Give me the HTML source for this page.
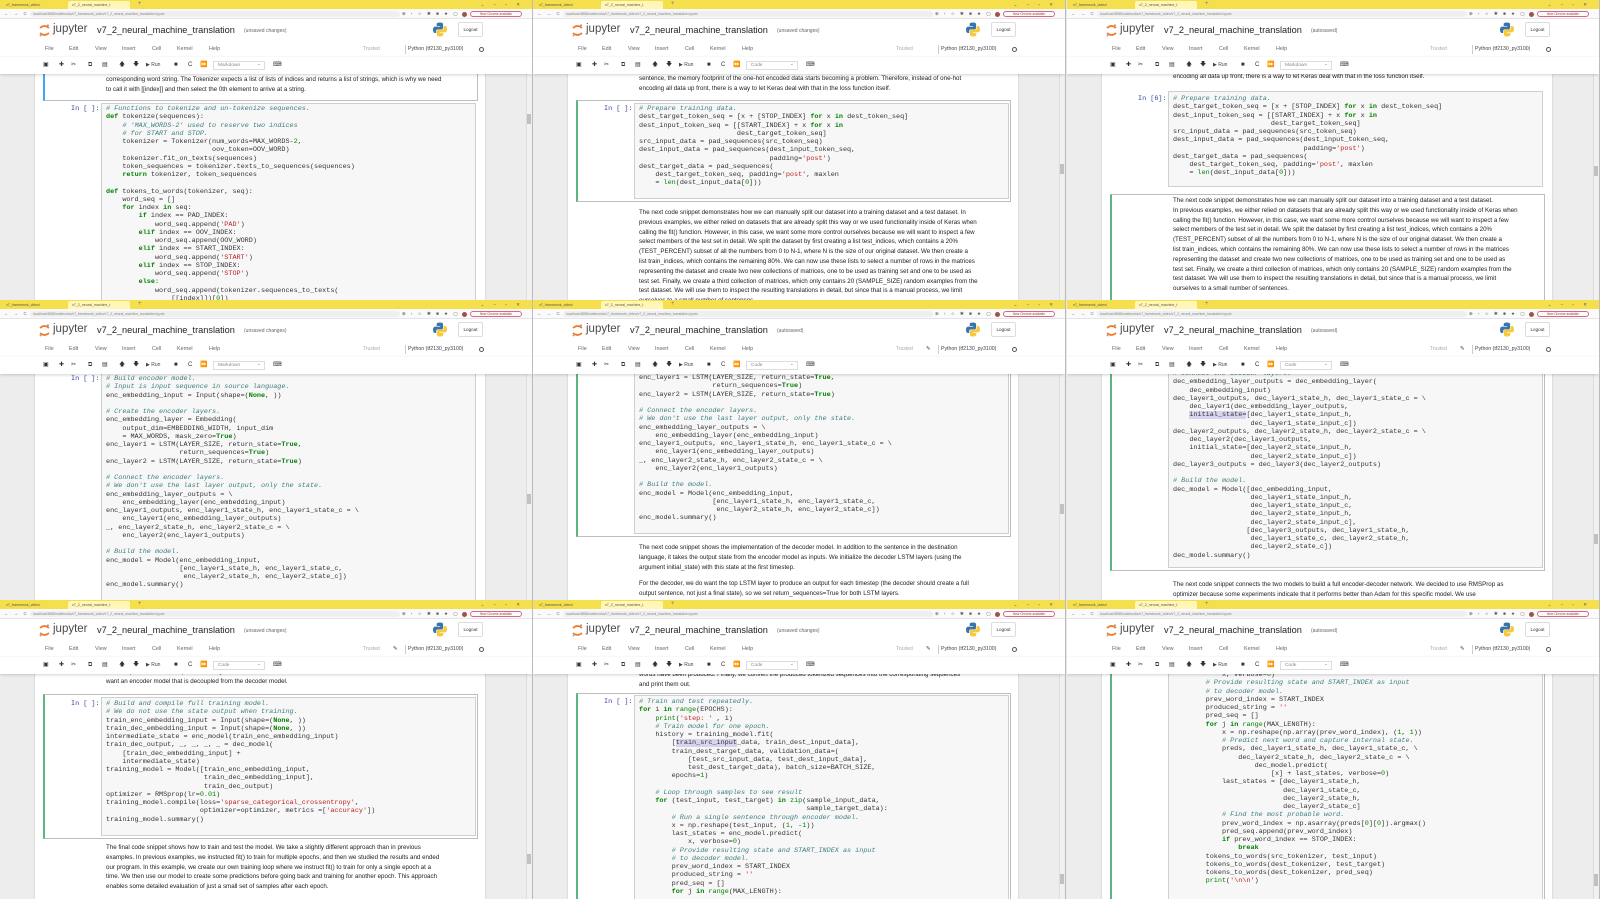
<!DOCTYPE html>
<html><head><meta charset="utf-8">
<style>
*{margin:0;padding:0;box-sizing:border-box}
html,body{width:1600px;height:899px;overflow:hidden;background:#e8e8e8;font-family:"Liberation Sans",sans-serif}
.p{position:absolute;width:533px;height:300px;overflow:hidden;background:#ededed;border-right:1px solid #bbb}
.p .nbk{position:absolute;left:35px;width:450px;top:0;bottom:0;background:#fff;box-shadow:0 0 2px rgba(0,0,0,.2)}
.yb{position:absolute;left:0;top:0;width:100%;height:9px;background:#f5df4d;z-index:3}
.yb .tab{position:absolute;top:1px;height:8px;font-size:3.6px;line-height:8px;color:#555;padding-left:4px;width:62px;white-space:nowrap;overflow:hidden}
.yb .t1{left:2px}
.yb .t2{left:68px;background:#fff6b8;border-radius:2px 2px 0 0}
.yb .plus{position:absolute;left:138px;top:0;font-size:6px;color:#777;line-height:9px}
.yb .wc{position:absolute;right:8px;top:0;font-size:4.5px;color:#555;line-height:9px;letter-spacing:4px}
.ab{position:absolute;left:0;top:9px;width:100%;height:10px;background:#fafafa;z-index:3;border-bottom:1px solid #e4e4e4}
.ab .nav{position:absolute;left:4px;top:0;font-size:4.5px;line-height:10px;color:#777;letter-spacing:2px}
.ab .url{position:absolute;left:30px;top:2px;height:6px;width:370px;background:#efefef;border-radius:3px;font-size:3.4px;line-height:6px;color:#888;padding-left:3px;white-space:nowrap;overflow:hidden}
.ab .ic{position:absolute;left:402px;top:0;font-size:4.5px;line-height:10px;color:#555;letter-spacing:2px}
.ab .av{position:absolute;left:462px;top:2.5px;width:5px;height:5px;border-radius:50%;background:#a0524a}
.ab .pill{position:absolute;left:470px;top:2px;width:52px;height:6px;border:1px solid #d06a8a;border-radius:3px;font-size:3.2px;line-height:4px;color:#b33;text-align:center;white-space:nowrap;overflow:hidden}
.hd{position:absolute;left:0;top:19px;width:100%;height:23px;background:#fff;z-index:3}
.hd .jl{position:absolute;left:39px;top:5px}
.hd .jt{position:absolute;left:53px;top:4px;font-size:11.5px;color:#4a4a4a;line-height:13px}
.hd .nt{position:absolute;left:97px;top:5px;font-size:9.2px;color:#222;line-height:12px}
.hd .us{position:absolute;left:244px;top:9px;font-size:5px;color:#666;line-height:6px}
.hd .pl{position:absolute;left:433px;top:3px}
.hd .lo{position:absolute;left:458px;top:3px;width:25px;height:15px;border:1px solid #ddd;border-radius:2px;font-size:4.6px;line-height:13px;text-align:center;color:#333}
.mb{position:absolute;left:0;top:42px;width:100%;height:15px;background:#fff;z-index:3}
.mb span{position:absolute;top:0;font-size:5.4px;line-height:15px;color:#666}
.mb .kn{left:405px;border-left:1px solid #ccc;padding-left:2px;color:#444;font-size:5.2px;line-height:9px;top:3px}
.mb .kc{left:479px;top:4.5px;width:5px;height:5px;border:1px solid #555;border-radius:50%;line-height:0}
.mb .tr{left:363px;color:#aaa;font-size:5px}
.mb .pen{left:393px;color:#444;font-size:5.5px}
.tb{position:absolute;left:0;top:57px;width:100%;height:17px;background:#fff;z-index:3;box-shadow:0 1px 3px rgba(0,0,0,.18)}
.tb span{position:absolute;top:0;font-size:6px;line-height:17px;color:#333}
.tb .sel{left:213px;top:4px;width:52px;height:9px;border:1px solid #ddd;font-size:4.8px;line-height:7px;color:#888;padding-left:4px}
.tb .sel:after{content:"⌄";position:absolute;right:3px;top:-1px;font-size:5px}
.tb .run{font-size:5px;color:#444}
.cell{position:absolute;left:43px;width:435px;border:1px solid transparent}
.cell.sel{border:1px solid #bdbdbd;border-left:2px solid #5db67f}
.cell.md{border:1px solid #bdbdbd;border-left:2px solid #42a5f5}
.area{position:absolute;left:101px;width:375px;background:#f7f7f7;border:1px solid #cfcfcf}
.pr{position:absolute;left:71px;font-family:"Liberation Mono",monospace;font-size:6.8px;line-height:8.25px;color:#303f9f;white-space:pre}
pre{position:absolute;left:106px;font-family:"Liberation Mono",monospace;font-size:6.8px;line-height:8.25px;color:#333;white-space:pre}
.c{color:#3d7f7f;font-style:italic}
.k{color:#008000;font-weight:bold}
.s{color:#ba2121}
.n{color:#080}
.b{color:#008000}
.mdt{position:absolute;left:106px;font-size:6.2px;line-height:9.8px;color:#222;white-space:nowrap}
.sb{position:absolute;right:1px;top:74px;width:5px;bottom:0;background:#f1f1f1;border-left:1px solid #ddd}
.sb i{position:absolute;left:0;width:4px;background:#c1c1c1}
</style></head><body>

<!-- ============ PANEL 1 ============ -->
<div class="p" style="left:0;top:0">
<div class="nbk"></div>
<div class="yb"><span class="tab t1">v7_framework_video/</span><span class="tab t2">v7_2_neural_machine_t</span><span class="plus">+</span><span class="wc">⌄ – ▫ ✕</span></div>
<div class="ab"><span class="nav">← → C</span><span class="url">localhost:8888/notebooks/v7_framework_video/v7_2_neural_machine_translation.ipynb</span><span class="ic">⊕ ‹ ☆ ✱ ■ ★ ▢</span><span class="av"></span><span class="pill">New Chrome available</span></div>
<div class="hd"><svg class="jl" width="11" height="13" viewBox="0 0 11 13"><path d="M1 4 Q5.5 0 10 4" stroke="#f37726" stroke-width="1.6" fill="none"/><path d="M1 9 Q5.5 13 10 9" stroke="#f37726" stroke-width="1.6" fill="none"/><circle cx="9" cy="1.2" r="0.8" fill="#767677"/><circle cx="1.5" cy="11.5" r="0.9" fill="#989798"/></svg><span class="jt">jupyter</span><span class="nt">v7_2_neural_machine_translation</span><span class="us">(unsaved changes)</span><svg class="pl" width="14" height="15" viewBox="0 0 14 15"><path d="M7 0.5C3.5 0.5 3.7 2 3.7 2V4H7.2V4.6H2.2C2.2 4.6 0 4.4 0 7.8S2 11 2 11H3.2V9.3C3.2 9.3 3.1 7.4 5 7.4H8.3C8.3 7.4 10.1 7.4 10.1 5.6V2.3C10.1 2.3 10.4 0.5 7 0.5Z" fill="#3a74a8"/><path d="M7 14.5C10.5 14.5 10.3 13 10.3 13V11H6.8V10.4H11.8C11.8 10.4 14 10.6 14 7.2S12 4 12 4H10.8V5.7C10.8 5.7 10.9 7.6 9 7.6H5.7C5.7 7.6 3.9 7.6 3.9 9.4V12.7C3.9 12.7 3.6 14.5 7 14.5Z" fill="#f7c93e"/></svg><span class="lo">Logout</span></div>
<div class="mb"><span style="left:45px">File</span><span style="left:69px">Edit</span><span style="left:95px">View</span><span style="left:122px">Insert</span><span style="left:152px">Cell</span><span style="left:177px">Kernel</span><span style="left:209px">Help</span><span class="tr">Trusted</span><span class="kn">Python (tf2130_py3100)</span><span class="kc"></span></div>
<div class="tb"><span style="left:43px">▣</span><span style="left:59px">✚</span><span style="left:71px">✂</span><span style="left:88px">⧉</span><span style="left:102px">▤</span><span style="left:119px">🡅</span><span style="left:133px">🡇</span><span class="run" style="left:146px">▶ Run</span><span style="left:174px">■</span><span style="left:188px">C</span><span style="left:200px">⏩</span><span class="sel">Markdown</span><span style="left:273px">⌨</span></div>
<div class="cell md" style="top:70px;height:31px"></div>
<div class="mdt" style="top:75px">corresponding word string. The Tokenizer expects a list of lists of indices and returns a list of strings, which is why we need<br>to call it with [[index]] and then select the 0th element to arrive at a string.</div>
<div class="area" style="top:103px;height:200px"></div>
<div class="pr" style="top:105px">In [ ]:</div>
<pre style="top:105px"><span class="c"># Functions to tokenize and un-tokenize sequences.</span>
<span class="k">def</span> tokenize(sequences):
    <span class="c"># 'MAX_WORDS-2' used to reserve two indices</span>
    <span class="c"># for START and STOP.</span>
    tokenizer = Tokenizer(num_words=MAX_WORDS-<span class="n">2</span>,
                          oov_token=OOV_WORD)
    tokenizer.fit_on_texts(sequences)
    token_sequences = tokenizer.texts_to_sequences(sequences)
    <span class="k">return</span> tokenizer, token_sequences

<span class="k">def</span> tokens_to_words(tokenizer, seq):
    word_seq = []
    <span class="k">for</span> index <span class="k">in</span> seq:
        <span class="k">if</span> index == PAD_INDEX:
            word_seq.append(<span class="s">'PAD'</span>)
        <span class="k">elif</span> index == OOV_INDEX:
            word_seq.append(OOV_WORD)
        <span class="k">elif</span> index == START_INDEX:
            word_seq.append(<span class="s">'START'</span>)
        <span class="k">elif</span> index == STOP_INDEX:
            word_seq.append(<span class="s">'STOP'</span>)
        <span class="k">else</span>:
            word_seq.append(tokenizer.sequences_to_texts(
                [[index]])[<span class="n">0</span>])</pre>
<div class="sb"><i style="top:40px;height:10px"></i></div>
</div>

<!-- ============ PANEL 2 ============ -->
<div class="p" style="left:533px;top:0">
<div class="nbk"></div>
<div class="yb"><span class="tab t1">v7_framework_video/</span><span class="tab t2">v7_2_neural_machine_t</span><span class="plus">+</span><span class="wc">⌄ – ▫ ✕</span></div>
<div class="ab"><span class="nav">← → C</span><span class="url">localhost:8888/notebooks/v7_framework_video/v7_2_neural_machine_translation.ipynb</span><span class="ic">⊕ ‹ ☆ ✱ ■ ★ ▢</span><span class="av"></span><span class="pill">New Chrome available</span></div>
<div class="hd"><svg class="jl" width="11" height="13" viewBox="0 0 11 13"><path d="M1 4 Q5.5 0 10 4" stroke="#f37726" stroke-width="1.6" fill="none"/><path d="M1 9 Q5.5 13 10 9" stroke="#f37726" stroke-width="1.6" fill="none"/><circle cx="9" cy="1.2" r="0.8" fill="#767677"/><circle cx="1.5" cy="11.5" r="0.9" fill="#989798"/></svg><span class="jt">jupyter</span><span class="nt">v7_2_neural_machine_translation</span><span class="us">(unsaved changes)</span><svg class="pl" width="14" height="15" viewBox="0 0 14 15"><path d="M7 0.5C3.5 0.5 3.7 2 3.7 2V4H7.2V4.6H2.2C2.2 4.6 0 4.4 0 7.8S2 11 2 11H3.2V9.3C3.2 9.3 3.1 7.4 5 7.4H8.3C8.3 7.4 10.1 7.4 10.1 5.6V2.3C10.1 2.3 10.4 0.5 7 0.5Z" fill="#3a74a8"/><path d="M7 14.5C10.5 14.5 10.3 13 10.3 13V11H6.8V10.4H11.8C11.8 10.4 14 10.6 14 7.2S12 4 12 4H10.8V5.7C10.8 5.7 10.9 7.6 9 7.6H5.7C5.7 7.6 3.9 7.6 3.9 9.4V12.7C3.9 12.7 3.6 14.5 7 14.5Z" fill="#f7c93e"/></svg><span class="lo">Logout</span></div>
<div class="mb"><span style="left:45px">File</span><span style="left:69px">Edit</span><span style="left:95px">View</span><span style="left:122px">Insert</span><span style="left:152px">Cell</span><span style="left:177px">Kernel</span><span style="left:209px">Help</span><span class="tr">Trusted</span><span class="kn">Python (tf2130_py3100)</span><span class="kc"></span></div>
<div class="tb"><span style="left:43px">▣</span><span style="left:59px">✚</span><span style="left:71px">✂</span><span style="left:88px">⧉</span><span style="left:102px">▤</span><span style="left:119px">🡅</span><span style="left:133px">🡇</span><span class="run" style="left:146px">▶ Run</span><span style="left:174px">■</span><span style="left:188px">C</span><span style="left:200px">⏩</span><span class="sel">Code</span><span style="left:273px">⌨</span></div>
<div class="mdt" style="top:74px">sentence, the memory footprint of the one-hot encoded data starts becoming a problem. Therefore, instead of one-hot<br>encoding all data up front, there is a way to let Keras deal with that in the loss function itself.</div>
<div class="cell sel" style="top:100px;height:102px"></div>
<div class="area" style="top:103px;height:96px"></div>
<div class="pr" style="top:105px">In [ ]:</div>
<pre style="top:105px"><span class="c"># Prepare training data.</span>
dest_target_token_seq = [x + [STOP_INDEX] <span class="k">for</span> x <span class="k">in</span> dest_token_seq]
dest_input_token_seq = [[START_INDEX] + x <span class="k">for</span> x <span class="k">in</span>
                        dest_target_token_seq]
src_input_data = pad_sequences(src_token_seq)
dest_input_data = pad_sequences(dest_input_token_seq,
                                padding=<span class="s">'post'</span>)
dest_target_data = pad_sequences(
    dest_target_token_seq, padding=<span class="s">'post'</span>, maxlen
    = <span class="b">len</span>(dest_input_data[<span class="n">0</span>]))</pre>
<div class="mdt" style="top:208px">The next code snippet demonstrates how we can manually split our dataset into a training dataset and a test dataset. In<br>previous examples, we either relied on datasets that are already split this way or we used functionality inside of Keras when<br>calling the fit() function. However, in this case, we want some more control ourselves because we will want to inspect a few<br>select members of the test set in detail. We split the dataset by first creating a list test_indices, which contains a 20%<br>(TEST_PERCENT) subset of all the numbers from 0 to N-1, where N is the size of our original dataset. We then create a<br>list train_indices, which contains the remaining 80%. We can now use these lists to select a number of rows in the matrices<br>representing the dataset and create two new collections of matrices, one to be used as training set and one to be used as<br>test set. Finally, we create a third collection of matrices, which only contains 20 (SAMPLE_SIZE) random examples from the<br>test dataset. We will use them to inspect the resulting translations in detail, but since that is a manual process, we limit<br>ourselves to a small number of sentences.</div>
<div class="sb"><i style="top:90px;height:10px"></i></div>
</div>

<!-- ============ PANEL 3 ============ -->
<div class="p" style="left:1067px;top:0;width:533px">
<div class="nbk"></div>
<div class="yb"><span class="tab t1">v7_framework_video/</span><span class="tab t2">v7_2_neural_machine_t</span><span class="plus">+</span><span class="wc">⌄ – ▫ ✕</span></div>
<div class="ab"><span class="nav">← → C</span><span class="url">localhost:8888/notebooks/v7_framework_video/v7_2_neural_machine_translation.ipynb</span><span class="ic">⊕ ‹ ☆ ✱ ■ ★ ▢</span><span class="av"></span><span class="pill">New Chrome available</span></div>
<div class="hd"><svg class="jl" width="11" height="13" viewBox="0 0 11 13"><path d="M1 4 Q5.5 0 10 4" stroke="#f37726" stroke-width="1.6" fill="none"/><path d="M1 9 Q5.5 13 10 9" stroke="#f37726" stroke-width="1.6" fill="none"/><circle cx="9" cy="1.2" r="0.8" fill="#767677"/><circle cx="1.5" cy="11.5" r="0.9" fill="#989798"/></svg><span class="jt">jupyter</span><span class="nt">v7_2_neural_machine_translation</span><span class="us">(autosaved)</span><svg class="pl" width="14" height="15" viewBox="0 0 14 15"><path d="M7 0.5C3.5 0.5 3.7 2 3.7 2V4H7.2V4.6H2.2C2.2 4.6 0 4.4 0 7.8S2 11 2 11H3.2V9.3C3.2 9.3 3.1 7.4 5 7.4H8.3C8.3 7.4 10.1 7.4 10.1 5.6V2.3C10.1 2.3 10.4 0.5 7 0.5Z" fill="#3a74a8"/><path d="M7 14.5C10.5 14.5 10.3 13 10.3 13V11H6.8V10.4H11.8C11.8 10.4 14 10.6 14 7.2S12 4 12 4H10.8V5.7C10.8 5.7 10.9 7.6 9 7.6H5.7C5.7 7.6 3.9 7.6 3.9 9.4V12.7C3.9 12.7 3.6 14.5 7 14.5Z" fill="#f7c93e"/></svg><span class="lo">Logout</span></div>
<div class="mb"><span style="left:45px">File</span><span style="left:69px">Edit</span><span style="left:95px">View</span><span style="left:122px">Insert</span><span style="left:152px">Cell</span><span style="left:177px">Kernel</span><span style="left:209px">Help</span><span class="tr">Trusted</span><span class="kn">Python (tf2130_py3100)</span><span class="kc"></span></div>
<div class="tb"><span style="left:43px">▣</span><span style="left:59px">✚</span><span style="left:71px">✂</span><span style="left:88px">⧉</span><span style="left:102px">▤</span><span style="left:119px">🡅</span><span style="left:133px">🡇</span><span class="run" style="left:146px">▶ Run</span><span style="left:174px">■</span><span style="left:188px">C</span><span style="left:200px">⏩</span><span class="sel">Markdown</span><span style="left:273px">⌨</span></div>
<div class="mdt" style="top:72px">encoding all data up front, there is a way to let Keras deal with that in the loss function itself.</div>
<div class="area" style="top:91px;height:96px"></div>
<div class="pr" style="top:95px">In [6]:</div>
<pre style="top:95px"><span class="c"># Prepare training data.</span>
dest_target_token_seq = [x + [STOP_INDEX] <span class="k">for</span> x <span class="k">in</span> dest_token_seq]
dest_input_token_seq = [[START_INDEX] + x <span class="k">for</span> x <span class="k">in</span>
                        dest_target_token_seq]
src_input_data = pad_sequences(src_token_seq)
dest_input_data = pad_sequences(dest_input_token_seq,
                                padding=<span class="s">'post'</span>)
dest_target_data = pad_sequences(
    dest_target_token_seq, padding=<span class="s">'post'</span>, maxlen
    = <span class="b">len</span>(dest_input_data[<span class="n">0</span>]))</pre>
<div class="cell sel" style="top:194px;height:110px"></div>
<div class="mdt" style="top:196px">The next code snippet demonstrates how we can manually split our dataset into a training dataset and a test dataset.<br>In previous examples, we either relied on datasets that are already split this way or we used functionality inside of Keras when<br>calling the fit() function. However, in this case, we want some more control ourselves because we will want to inspect a few<br>select members of the test set in detail. We split the dataset by first creating a list test_indices, which contains a 20%<br>(TEST_PERCENT) subset of all the numbers from 0 to N-1, where N is the size of our original dataset. We then create a<br>list train_indices, which contains the remaining 80%. We can now use these lists to select a number of rows in the matrices<br>representing the dataset and create two new collections of matrices, one to be used as training set and one to be used as<br>test set. Finally, we create a third collection of matrices, which only contains 20 (SAMPLE_SIZE) random examples from the<br>test dataset. We will use them to inspect the resulting translations in detail, but since that is a manual process, we limit<br>ourselves to a small number of sentences.</div>
<div class="sb"><i style="top:92px;height:10px"></i></div>
</div>

<!-- ============ PANEL 4 ============ -->
<div class="p" style="left:0;top:300px">
<div class="nbk"></div>
<div class="yb"><span class="tab t1">v7_framework_video/</span><span class="tab t2">v7_2_neural_machine_t</span><span class="plus">+</span><span class="wc">⌄ – ▫ ✕</span></div>
<div class="ab"><span class="nav">← → C</span><span class="url">localhost:8888/notebooks/v7_framework_video/v7_2_neural_machine_translation.ipynb</span><span class="ic">⊕ ‹ ☆ ✱ ■ ★ ▢</span><span class="av"></span><span class="pill">New Chrome available</span></div>
<div class="hd"><svg class="jl" width="11" height="13" viewBox="0 0 11 13"><path d="M1 4 Q5.5 0 10 4" stroke="#f37726" stroke-width="1.6" fill="none"/><path d="M1 9 Q5.5 13 10 9" stroke="#f37726" stroke-width="1.6" fill="none"/><circle cx="9" cy="1.2" r="0.8" fill="#767677"/><circle cx="1.5" cy="11.5" r="0.9" fill="#989798"/></svg><span class="jt">jupyter</span><span class="nt">v7_2_neural_machine_translation</span><span class="us">(unsaved changes)</span><svg class="pl" width="14" height="15" viewBox="0 0 14 15"><path d="M7 0.5C3.5 0.5 3.7 2 3.7 2V4H7.2V4.6H2.2C2.2 4.6 0 4.4 0 7.8S2 11 2 11H3.2V9.3C3.2 9.3 3.1 7.4 5 7.4H8.3C8.3 7.4 10.1 7.4 10.1 5.6V2.3C10.1 2.3 10.4 0.5 7 0.5Z" fill="#3a74a8"/><path d="M7 14.5C10.5 14.5 10.3 13 10.3 13V11H6.8V10.4H11.8C11.8 10.4 14 10.6 14 7.2S12 4 12 4H10.8V5.7C10.8 5.7 10.9 7.6 9 7.6H5.7C5.7 7.6 3.9 7.6 3.9 9.4V12.7C3.9 12.7 3.6 14.5 7 14.5Z" fill="#f7c93e"/></svg><span class="lo">Logout</span></div>
<div class="mb"><span style="left:45px">File</span><span style="left:69px">Edit</span><span style="left:95px">View</span><span style="left:122px">Insert</span><span style="left:152px">Cell</span><span style="left:177px">Kernel</span><span style="left:209px">Help</span><span class="tr">Trusted</span><span class="kn">Python (tf2130_py3100)</span><span class="kc"></span></div>
<div class="tb"><span style="left:43px">▣</span><span style="left:59px">✚</span><span style="left:71px">✂</span><span style="left:88px">⧉</span><span style="left:102px">▤</span><span style="left:119px">🡅</span><span style="left:133px">🡇</span><span class="run" style="left:146px">▶ Run</span><span style="left:174px">■</span><span style="left:188px">C</span><span style="left:200px">⏩</span><span class="sel">Markdown</span><span style="left:273px">⌨</span></div>
<div class="area" style="top:72px;height:240px"></div>
<div class="pr" style="top:75px">In [ ]:</div>
<pre style="top:75px"><span class="c"># Build encoder model.</span>
<span class="c"># Input is input sequence in source language.</span>
enc_embedding_input = Input(shape=(<span class="k">None</span>, ))

<span class="c"># Create the encoder layers.</span>
enc_embedding_layer = Embedding(
    output_dim=EMBEDDING_WIDTH, input_dim
    = MAX_WORDS, mask_zero=<span class="k">True</span>)
enc_layer1 = LSTM(LAYER_SIZE, return_state=<span class="k">True</span>,
                  return_sequences=<span class="k">True</span>)
enc_layer2 = LSTM(LAYER_SIZE, return_state=<span class="k">True</span>)

<span class="c"># Connect the encoder layers.</span>
<span class="c"># We don't use the last layer output, only the state.</span>
enc_embedding_layer_outputs = \
    enc_embedding_layer(enc_embedding_input)
enc_layer1_outputs, enc_layer1_state_h, enc_layer1_state_c = \
    enc_layer1(enc_embedding_layer_outputs)
_, enc_layer2_state_h, enc_layer2_state_c = \
    enc_layer2(enc_layer1_outputs)

<span class="c"># Build the model.</span>
enc_model = Model(enc_embedding_input,
                  [enc_layer1_state_h, enc_layer1_state_c,
                   enc_layer2_state_h, enc_layer2_state_c])
enc_model.summary()</pre>
<div class="sb"><i style="top:120px;height:10px"></i></div>
</div>

<!-- ============ PANEL 5 ============ -->
<div class="p" style="left:533px;top:300px">
<div class="nbk"></div>
<div class="yb"><span class="tab t1">v7_framework_video/</span><span class="tab t2">v7_2_neural_machine_t</span><span class="plus">+</span><span class="wc">⌄ – ▫ ✕</span></div>
<div class="ab"><span class="nav">← → C</span><span class="url">localhost:8888/notebooks/v7_framework_video/v7_2_neural_machine_translation.ipynb</span><span class="ic">⊕ ‹ ☆ ✱ ■ ★ ▢</span><span class="av"></span><span class="pill">New Chrome available</span></div>
<div class="hd"><svg class="jl" width="11" height="13" viewBox="0 0 11 13"><path d="M1 4 Q5.5 0 10 4" stroke="#f37726" stroke-width="1.6" fill="none"/><path d="M1 9 Q5.5 13 10 9" stroke="#f37726" stroke-width="1.6" fill="none"/><circle cx="9" cy="1.2" r="0.8" fill="#767677"/><circle cx="1.5" cy="11.5" r="0.9" fill="#989798"/></svg><span class="jt">jupyter</span><span class="nt">v7_2_neural_machine_translation</span><span class="us">(autosaved)</span><svg class="pl" width="14" height="15" viewBox="0 0 14 15"><path d="M7 0.5C3.5 0.5 3.7 2 3.7 2V4H7.2V4.6H2.2C2.2 4.6 0 4.4 0 7.8S2 11 2 11H3.2V9.3C3.2 9.3 3.1 7.4 5 7.4H8.3C8.3 7.4 10.1 7.4 10.1 5.6V2.3C10.1 2.3 10.4 0.5 7 0.5Z" fill="#3a74a8"/><path d="M7 14.5C10.5 14.5 10.3 13 10.3 13V11H6.8V10.4H11.8C11.8 10.4 14 10.6 14 7.2S12 4 12 4H10.8V5.7C10.8 5.7 10.9 7.6 9 7.6H5.7C5.7 7.6 3.9 7.6 3.9 9.4V12.7C3.9 12.7 3.6 14.5 7 14.5Z" fill="#f7c93e"/></svg><span class="lo">Logout</span></div>
<div class="mb"><span style="left:45px">File</span><span style="left:69px">Edit</span><span style="left:95px">View</span><span style="left:122px">Insert</span><span style="left:152px">Cell</span><span style="left:177px">Kernel</span><span style="left:209px">Help</span><span class="tr">Trusted</span><span class="pen">✎</span><span class="kn">Python (tf2130_py3100)</span><span class="kc"></span></div>
<div class="tb"><span style="left:43px">▣</span><span style="left:59px">✚</span><span style="left:71px">✂</span><span style="left:88px">⧉</span><span style="left:102px">▤</span><span style="left:119px">🡅</span><span style="left:133px">🡇</span><span class="run" style="left:146px">▶ Run</span><span style="left:174px">■</span><span style="left:188px">C</span><span style="left:200px">⏩</span><span class="sel">Code</span><span style="left:273px">⌨</span></div>
<div class="cell sel" style="top:66px;height:171px"></div>
<div class="area" style="top:66px;height:168px"></div>
<pre style="top:74px">enc_layer1 = LSTM(LAYER_SIZE, return_state=<span class="k">True</span>,
                  return_sequences=<span class="k">True</span>)
enc_layer2 = LSTM(LAYER_SIZE, return_state=<span class="k">True</span>)

<span class="c"># Connect the encoder layers.</span>
<span class="c"># We don't use the last layer output, only the state.</span>
enc_embedding_layer_outputs = \
    enc_embedding_layer(enc_embedding_input)
enc_layer1_outputs, enc_layer1_state_h, enc_layer1_state_c = \
    enc_layer1(enc_embedding_layer_outputs)
_, enc_layer2_state_h, enc_layer2_state_c = \
    enc_layer2(enc_layer1_outputs)

<span class="c"># Build the model.</span>
enc_model = Model(enc_embedding_input,
                  [enc_layer1_state_h, enc_layer1_state_c,
                   enc_layer2_state_h, enc_layer2_state_c])
enc_model.summary()</pre>
<div class="mdt" style="top:243px">The next code snippet shows the implementation of the decoder model. In addition to the sentence in the destination<br>language, it takes the output state from the encoder model as inputs. We initialize the decoder LSTM layers (using the<br>argument initial_state) with this state at the first timestep.</div>
<div class="mdt" style="top:279px">For the decoder, we do want the top LSTM layer to produce an output for each timestep (the decoder should create a full<br>output sentence, not just a final state), so we set return_sequences=True for both LSTM layers.</div>
<div class="sb"><i style="top:130px;height:10px"></i></div>
</div>

<!-- ============ PANEL 6 ============ -->
<div class="p" style="left:1067px;top:300px">
<div class="nbk"></div>
<div class="yb"><span class="tab t1">v7_framework_video/</span><span class="tab t2">v7_2_neural_machine_t</span><span class="plus">+</span><span class="wc">⌄ – ▫ ✕</span></div>
<div class="ab"><span class="nav">← → C</span><span class="url">localhost:8888/notebooks/v7_framework_video/v7_2_neural_machine_translation.ipynb</span><span class="ic">⊕ ‹ ☆ ✱ ■ ★ ▢</span><span class="av"></span><span class="pill">New Chrome available</span></div>
<div class="hd"><svg class="jl" width="11" height="13" viewBox="0 0 11 13"><path d="M1 4 Q5.5 0 10 4" stroke="#f37726" stroke-width="1.6" fill="none"/><path d="M1 9 Q5.5 13 10 9" stroke="#f37726" stroke-width="1.6" fill="none"/><circle cx="9" cy="1.2" r="0.8" fill="#767677"/><circle cx="1.5" cy="11.5" r="0.9" fill="#989798"/></svg><span class="jt">jupyter</span><span class="nt">v7_2_neural_machine_translation</span><span class="us">(autosaved)</span><svg class="pl" width="14" height="15" viewBox="0 0 14 15"><path d="M7 0.5C3.5 0.5 3.7 2 3.7 2V4H7.2V4.6H2.2C2.2 4.6 0 4.4 0 7.8S2 11 2 11H3.2V9.3C3.2 9.3 3.1 7.4 5 7.4H8.3C8.3 7.4 10.1 7.4 10.1 5.6V2.3C10.1 2.3 10.4 0.5 7 0.5Z" fill="#3a74a8"/><path d="M7 14.5C10.5 14.5 10.3 13 10.3 13V11H6.8V10.4H11.8C11.8 10.4 14 10.6 14 7.2S12 4 12 4H10.8V5.7C10.8 5.7 10.9 7.6 9 7.6H5.7C5.7 7.6 3.9 7.6 3.9 9.4V12.7C3.9 12.7 3.6 14.5 7 14.5Z" fill="#f7c93e"/></svg><span class="lo">Logout</span></div>
<div class="mb"><span style="left:45px">File</span><span style="left:69px">Edit</span><span style="left:95px">View</span><span style="left:122px">Insert</span><span style="left:152px">Cell</span><span style="left:177px">Kernel</span><span style="left:209px">Help</span><span class="tr">Trusted</span><span class="pen">✎</span><span class="kn">Python (tf2130_py3100)</span><span class="kc"></span></div>
<div class="tb"><span style="left:43px">▣</span><span style="left:59px">✚</span><span style="left:71px">✂</span><span style="left:88px">⧉</span><span style="left:102px">▤</span><span style="left:119px">🡅</span><span style="left:133px">🡇</span><span class="run" style="left:146px">▶ Run</span><span style="left:174px">■</span><span style="left:188px">C</span><span style="left:200px">⏩</span><span class="sel">Code</span><span style="left:273px">⌨</span></div>
<div class="cell sel" style="top:66px;height:205px"></div>
<div class="area" style="top:66px;height:202px"></div>
<pre style="top:70px"><span class="c"># Connect the decoder layers.</span>
dec_embedding_layer_outputs = dec_embedding_layer(
    dec_embedding_input)
dec_layer1_outputs, dec_layer1_state_h, dec_layer1_state_c = \
    dec_layer1(dec_embedding_layer_outputs,
    <span style="background:#d7d4f0">initial_state=</span>[dec_layer1_state_input_h,
                   dec_layer1_state_input_c])
dec_layer2_outputs, dec_layer2_state_h, dec_layer2_state_c = \
    dec_layer2(dec_layer1_outputs,
    initial_state=[dec_layer2_state_input_h,
                   dec_layer2_state_input_c])
dec_layer3_outputs = dec_layer3(dec_layer2_outputs)

<span class="c"># Build the model.</span>
dec_model = Model([dec_embedding_input,
                   dec_layer1_state_input_h,
                   dec_layer1_state_input_c,
                   dec_layer2_state_input_h,
                   dec_layer2_state_input_c],
                  [dec_layer3_outputs, dec_layer1_state_h,
                   dec_layer1_state_c, dec_layer2_state_h,
                   dec_layer2_state_c])
dec_model.summary()</pre>
<div class="mdt" style="top:280px">The next code snippet connects the two models to build a full encoder-decoder network. We decided to use RMSProp as<br>optimizer because some experiments indicate that it performs better than Adam for this specific model. We use</div>
<div class="sb"><i style="top:160px;height:10px"></i></div>
</div>

<!-- ============ PANEL 7 ============ -->
<div class="p" style="left:0;top:600px;height:299px">
<div class="nbk"></div>
<div class="yb"><span class="tab t1">v7_framework_video/</span><span class="tab t2">v7_2_neural_machine_t</span><span class="plus">+</span><span class="wc">⌄ – ▫ ✕</span></div>
<div class="ab"><span class="nav">← → C</span><span class="url">localhost:8888/notebooks/v7_framework_video/v7_2_neural_machine_translation.ipynb</span><span class="ic">⊕ ‹ ☆ ✱ ■ ★ ▢</span><span class="av"></span><span class="pill">New Chrome available</span></div>
<div class="hd"><svg class="jl" width="11" height="13" viewBox="0 0 11 13"><path d="M1 4 Q5.5 0 10 4" stroke="#f37726" stroke-width="1.6" fill="none"/><path d="M1 9 Q5.5 13 10 9" stroke="#f37726" stroke-width="1.6" fill="none"/><circle cx="9" cy="1.2" r="0.8" fill="#767677"/><circle cx="1.5" cy="11.5" r="0.9" fill="#989798"/></svg><span class="jt">jupyter</span><span class="nt">v7_2_neural_machine_translation</span><span class="us">(unsaved changes)</span><svg class="pl" width="14" height="15" viewBox="0 0 14 15"><path d="M7 0.5C3.5 0.5 3.7 2 3.7 2V4H7.2V4.6H2.2C2.2 4.6 0 4.4 0 7.8S2 11 2 11H3.2V9.3C3.2 9.3 3.1 7.4 5 7.4H8.3C8.3 7.4 10.1 7.4 10.1 5.6V2.3C10.1 2.3 10.4 0.5 7 0.5Z" fill="#3a74a8"/><path d="M7 14.5C10.5 14.5 10.3 13 10.3 13V11H6.8V10.4H11.8C11.8 10.4 14 10.6 14 7.2S12 4 12 4H10.8V5.7C10.8 5.7 10.9 7.6 9 7.6H5.7C5.7 7.6 3.9 7.6 3.9 9.4V12.7C3.9 12.7 3.6 14.5 7 14.5Z" fill="#f7c93e"/></svg><span class="lo">Logout</span></div>
<div class="mb"><span style="left:45px">File</span><span style="left:69px">Edit</span><span style="left:95px">View</span><span style="left:122px">Insert</span><span style="left:152px">Cell</span><span style="left:177px">Kernel</span><span style="left:209px">Help</span><span class="tr">Trusted</span><span class="pen">✎</span><span class="kn">Python (tf2130_py3100)</span><span class="kc"></span></div>
<div class="tb"><span style="left:43px">▣</span><span style="left:59px">✚</span><span style="left:71px">✂</span><span style="left:88px">⧉</span><span style="left:102px">▤</span><span style="left:119px">🡅</span><span style="left:133px">🡇</span><span class="run" style="left:146px">▶ Run</span><span style="left:174px">■</span><span style="left:188px">C</span><span style="left:200px">⏩</span><span class="sel">Code</span><span style="left:273px">⌨</span></div>
<div class="mdt" style="top:67px">train the joint model, it will update the weights of the first two models. This is useful because, when we do inference, we<br>want an encoder model that is decoupled from the decoder model.</div>
<div class="cell sel" style="top:94px;height:145px"></div>
<div class="area" style="top:97px;height:139px"></div>
<div class="pr" style="top:100px">In [ ]:</div>
<pre style="top:100px"><span class="c"># Build and compile full training model.</span>
<span class="c"># We do not use the state output when training.</span>
train_enc_embedding_input = Input(shape=(<span class="k">None</span>, ))
train_dec_embedding_input = Input(shape=(<span class="k">None</span>, ))
intermediate_state = enc_model(train_enc_embedding_input)
train_dec_output, _, _, _, _ = dec_model(
    [train_dec_embedding_input] +
    intermediate_state)
training_model = Model([train_enc_embedding_input,
                        train_dec_embedding_input],
                        train_dec_output)
optimizer = RMSprop(lr=<span class="n">0.01</span>)
training_model.compile(loss=<span class="s">'sparse_categorical_crossentropy'</span>,
                       optimizer=optimizer, metrics =[<span class="s">'accuracy'</span>])
training_model.summary()</pre>
<div class="mdt" style="top:243px">The final code snippet shows how to train and test the model. We take a slightly different approach than in previous<br>examples. In previous examples, we instructed fit() to train for multiple epochs, and then we studied the results and ended<br>our program. In this example, we create our own training loop where we instruct fit() to train for only a single epoch at a<br>time. We then use our model to create some predictions before going back and training for another epoch. This approach<br>enables some detailed evaluation of just a small set of samples after each epoch.</div>
<div class="sb"><i style="top:180px;height:10px"></i></div>
</div>

<!-- ============ PANEL 8 ============ -->
<div class="p" style="left:533px;top:600px;height:299px">
<div class="nbk"></div>
<div class="yb"><span class="tab t1">v7_framework_video/</span><span class="tab t2">v7_2_neural_machine_t</span><span class="plus">+</span><span class="wc">⌄ – ▫ ✕</span></div>
<div class="ab"><span class="nav">← → C</span><span class="url">localhost:8888/notebooks/v7_framework_video/v7_2_neural_machine_translation.ipynb</span><span class="ic">⊕ ‹ ☆ ✱ ■ ★ ▢</span><span class="av"></span><span class="pill">New Chrome available</span></div>
<div class="hd"><svg class="jl" width="11" height="13" viewBox="0 0 11 13"><path d="M1 4 Q5.5 0 10 4" stroke="#f37726" stroke-width="1.6" fill="none"/><path d="M1 9 Q5.5 13 10 9" stroke="#f37726" stroke-width="1.6" fill="none"/><circle cx="9" cy="1.2" r="0.8" fill="#767677"/><circle cx="1.5" cy="11.5" r="0.9" fill="#989798"/></svg><span class="jt">jupyter</span><span class="nt">v7_2_neural_machine_translation</span><span class="us">(unsaved changes)</span><svg class="pl" width="14" height="15" viewBox="0 0 14 15"><path d="M7 0.5C3.5 0.5 3.7 2 3.7 2V4H7.2V4.6H2.2C2.2 4.6 0 4.4 0 7.8S2 11 2 11H3.2V9.3C3.2 9.3 3.1 7.4 5 7.4H8.3C8.3 7.4 10.1 7.4 10.1 5.6V2.3C10.1 2.3 10.4 0.5 7 0.5Z" fill="#3a74a8"/><path d="M7 14.5C10.5 14.5 10.3 13 10.3 13V11H6.8V10.4H11.8C11.8 10.4 14 10.6 14 7.2S12 4 12 4H10.8V5.7C10.8 5.7 10.9 7.6 9 7.6H5.7C5.7 7.6 3.9 7.6 3.9 9.4V12.7C3.9 12.7 3.6 14.5 7 14.5Z" fill="#f7c93e"/></svg><span class="lo">Logout</span></div>
<div class="mb"><span style="left:45px">File</span><span style="left:69px">Edit</span><span style="left:95px">View</span><span style="left:122px">Insert</span><span style="left:152px">Cell</span><span style="left:177px">Kernel</span><span style="left:209px">Help</span><span class="tr">Trusted</span><span class="pen">✎</span><span class="kn">Python (tf2130_py3100)</span><span class="kc"></span></div>
<div class="tb"><span style="left:43px">▣</span><span style="left:59px">✚</span><span style="left:71px">✂</span><span style="left:88px">⧉</span><span style="left:102px">▤</span><span style="left:119px">🡅</span><span style="left:133px">🡇</span><span class="run" style="left:146px">▶ Run</span><span style="left:174px">■</span><span style="left:188px">C</span><span style="left:200px">⏩</span><span class="sel">Code</span><span style="left:273px">⌨</span></div>
<div class="mdt" style="top:70px">words have been produced. Finally, we convert the produced tokenized sequences into the corresponding sequences<br>and print them out.</div>
<div class="cell sel" style="top:93px;height:220px"></div>
<div class="area" style="top:95px;height:220px"></div>
<div class="pr" style="top:98px">In [ ]:</div>
<pre style="top:98px"><span class="c"># Train and test repeatedly.</span>
<span class="k">for</span> i <span class="k">in</span> <span class="b">range</span>(EPOCHS):
    <span class="b">print</span>(<span class="s">'step: '</span> , i)
    <span class="c"># Train model for one epoch.</span>
    history = training_model.fit(
        [<span style="background:#d7d4f0">train_src_input</span>_data, train_dest_input_data],
        train_dest_target_data, validation_data=(
            [test_src_input_data, test_dest_input_data],
            test_dest_target_data), batch_size=BATCH_SIZE,
        epochs=<span class="n">1</span>)

    <span class="c"># Loop through samples to see result</span>
    <span class="k">for</span> (test_input, test_target) <span class="k">in</span> <span class="b">zip</span>(sample_input_data,
                                         sample_target_data):
        <span class="c"># Run a single sentence through encoder model.</span>
        x = np.reshape(test_input, (<span class="n">1</span>, -<span class="n">1</span>))
        last_states = enc_model.predict(
            x, verbose=<span class="n">0</span>)
        <span class="c"># Provide resulting state and START_INDEX as input</span>
        <span class="c"># to decoder model.</span>
        prev_word_index = START_INDEX
        produced_string = <span class="s">''</span>
        pred_seq = []
        <span class="k">for</span> j <span class="k">in</span> <span class="b">range</span>(MAX_LENGTH):</pre>
<div class="sb"><i style="top:200px;height:10px"></i></div>
</div>

<!-- ============ PANEL 9 ============ -->
<div class="p" style="left:1067px;top:600px;height:299px">
<div class="nbk"></div>
<div class="yb"><span class="tab t1">v7_framework_video/</span><span class="tab t2">v7_2_neural_machine_t</span><span class="plus">+</span><span class="wc">⌄ – ▫ ✕</span></div>
<div class="ab"><span class="nav">← → C</span><span class="url">localhost:8888/notebooks/v7_framework_video/v7_2_neural_machine_translation.ipynb</span><span class="ic">⊕ ‹ ☆ ✱ ■ ★ ▢</span><span class="av"></span><span class="pill">New Chrome available</span></div>
<div class="hd"><svg class="jl" width="11" height="13" viewBox="0 0 11 13"><path d="M1 4 Q5.5 0 10 4" stroke="#f37726" stroke-width="1.6" fill="none"/><path d="M1 9 Q5.5 13 10 9" stroke="#f37726" stroke-width="1.6" fill="none"/><circle cx="9" cy="1.2" r="0.8" fill="#767677"/><circle cx="1.5" cy="11.5" r="0.9" fill="#989798"/></svg><span class="jt">jupyter</span><span class="nt">v7_2_neural_machine_translation</span><span class="us">(autosaved)</span><svg class="pl" width="14" height="15" viewBox="0 0 14 15"><path d="M7 0.5C3.5 0.5 3.7 2 3.7 2V4H7.2V4.6H2.2C2.2 4.6 0 4.4 0 7.8S2 11 2 11H3.2V9.3C3.2 9.3 3.1 7.4 5 7.4H8.3C8.3 7.4 10.1 7.4 10.1 5.6V2.3C10.1 2.3 10.4 0.5 7 0.5Z" fill="#3a74a8"/><path d="M7 14.5C10.5 14.5 10.3 13 10.3 13V11H6.8V10.4H11.8C11.8 10.4 14 10.6 14 7.2S12 4 12 4H10.8V5.7C10.8 5.7 10.9 7.6 9 7.6H5.7C5.7 7.6 3.9 7.6 3.9 9.4V12.7C3.9 12.7 3.6 14.5 7 14.5Z" fill="#f7c93e"/></svg><span class="lo">Logout</span></div>
<div class="mb"><span style="left:45px">File</span><span style="left:69px">Edit</span><span style="left:95px">View</span><span style="left:122px">Insert</span><span style="left:152px">Cell</span><span style="left:177px">Kernel</span><span style="left:209px">Help</span><span class="tr">Trusted</span><span class="pen">✎</span><span class="kn">Python (tf2130_py3100)</span><span class="kc"></span></div>
<div class="tb"><span style="left:43px">▣</span><span style="left:59px">✚</span><span style="left:71px">✂</span><span style="left:88px">⧉</span><span style="left:102px">▤</span><span style="left:119px">🡅</span><span style="left:133px">🡇</span><span class="run" style="left:146px">▶ Run</span><span style="left:174px">■</span><span style="left:188px">C</span><span style="left:200px">⏩</span><span class="sel">Code</span><span style="left:273px">⌨</span></div>
<div class="cell sel" style="top:60px;height:260px"></div>
<div class="area" style="top:60px;height:260px"></div>
<pre style="top:71px">            x, verbose=<span class="n">0</span>)
        <span class="c"># Provide resulting state and START_INDEX as input</span>
        <span class="c"># to decoder model.</span>
        prev_word_index = START_INDEX
        produced_string = <span class="s">''</span>
        pred_seq = []
        <span class="k">for</span> j <span class="k">in</span> <span class="b">range</span>(MAX_LENGTH):
            x = np.reshape(np.array(prev_word_index), (<span class="n">1</span>, <span class="n">1</span>))
            <span class="c"># Predict next word and capture internal state.</span>
            preds, dec_layer1_state_h, dec_layer1_state_c, \
                dec_layer2_state_h, dec_layer2_state_c = \
                    dec_model.predict(
                        [x] + last_states, verbose=<span class="n">0</span>)
            last_states = [dec_layer1_state_h,
                           dec_layer1_state_c,
                           dec_layer2_state_h,
                           dec_layer2_state_c]
            <span class="c"># Find the most probable word.</span>
            prev_word_index = np.asarray(preds[<span class="n">0</span>][<span class="n">0</span>]).argmax()
            pred_seq.append(prev_word_index)
            <span class="k">if</span> prev_word_index == STOP_INDEX:
                <span class="k">break</span>
        tokens_to_words(src_tokenizer, test_input)
        tokens_to_words(dest_tokenizer, test_target)
        tokens_to_words(dest_tokenizer, pred_seq)
        <span class="b">print</span>(<span class="s">'\n\n'</span>)</pre>
<div class="sb"><i style="top:200px;height:12px"></i></div>
</div>

</body></html>
